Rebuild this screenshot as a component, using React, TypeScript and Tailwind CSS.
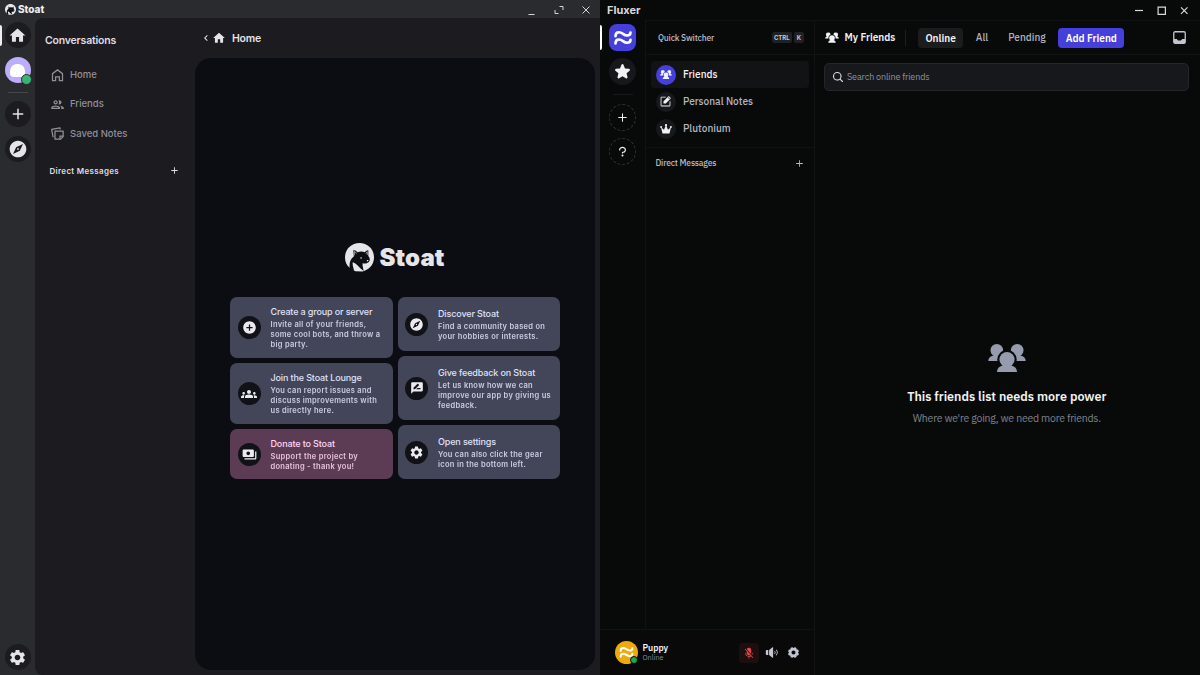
import type { ReactNode } from "react";
import {
  MdAdd,
  MdAddCircle,
  MdChevronLeft,
  MdExplore,
  MdGroups,
  MdHome,
  MdOutlineGroup,
  MdPayments,
  MdRateReview,
  MdSettings,
} from "react-icons/md";
import {
  PiGearFill,
  PiMagnifyingGlassBold,
  PiMicrophoneSlashFill,
  PiNotePencilFill,
  PiPlusBold,
  PiQuestionMarkBold,
  PiSpeakerHighFill,
  PiStarFill,
} from "react-icons/pi";

function StoatMark({ className }: { className?: string }) {
  return (
    <svg viewBox="0 0 56 56" className={className}>
      <path
        fill="#e6e5ea"
        d="M9 48C3 43 0 36 0 28 0 12 12 0 28 0s28 12 28 28c0 12-7 21-17 25l-5 2-14-.5Z"
      />
      <path
        fill="#0d0e13"
        d="M9 49C8 38 10 31 17 26L16 14q5-1 8 4 8-3 14 0 3-4 7-4v11q3 3 3 8-1 5-6 6-4 1-8 0v5l2 10q-6-4-12-11-5-5-9-6-1 6 2 14 1 4-8-2Z"
      />
      <path d="M18 24V16.500q3 1 4 4M40.500 20q1-2.500 2.500-3v6" fill="none" stroke="#e6e5ea" strokeWidth="1.300" />
      <circle cx="31" cy="29" r="1.600" fill="#e6e5ea" />
      <path d="M42 33h4l-3 3Z" fill="#e6e5ea" />
    </svg>
  );
}

function HouseOutline({ className }: { className?: string }) {
  return (
    <svg viewBox="0 0 24 24" fill="none" stroke="currentColor" strokeWidth="2" className={className}>
      <path d="M4 20V9l8-6 8 6v11h-5v-6H9v6Z" />
    </svg>
  );
}

function NoteStack({ className }: { className?: string }) {
  return (
    <svg viewBox="0 0 24 24" fill="none" stroke="currentColor" strokeWidth="2" className={className}>
      <path d="M8 8h13v9l-4 4H8Z" strokeLinejoin="round" />
      <path d="M21 16h-5v5" />
      <path d="M5 18 2.600 5.500 16 3l.5 2.500" strokeLinejoin="round" />
    </svg>
  );
}

function FriendsGlyph({ className }: { className?: string }) {
  return (
    <svg viewBox="0 0 38 28" fill="currentColor" className={className}>
      <mask id="friends-gap">
        <rect width="38" height="28" fill="white" />
        <circle cx="19" cy="15.500" r="9.700" fill="black" />
      </mask>
      <g mask="url(#friends-gap)">
        <circle cx="8.800" cy="6.300" r="6.300" />
        <path d="M5.500 10v1.500C2 12.500.3 14 .3 17H14v-7Z" />
        <circle cx="29.200" cy="6.300" r="6.300" />
        <path d="M32.500 10v1.500c3.500 1 5.200 2.500 5.200 5.500H24v-7Z" />
      </g>
      <circle cx="19" cy="15.500" r="7.600" />
      <path d="M14.500 20v1.500C11 22.500 9 24.500 9 28h20c0-3.500-2-5.500-5.500-6.500V20Z" />
    </svg>
  );
}

function Waves({ className }: { className?: string }) {
  return (
    <svg viewBox="0 0 18 14" fill="none" stroke="white" strokeWidth="2.600" strokeLinecap="round" className={className}>
      <path d="M1.500 5.200C1.500 2.500 3 1.300 5 1.300c3.500 0 4.500 3.200 8 3.200 2.200 0 3.500-1.200 3.500-3" />
      <path d="M1.500 12.400c0-2.700 1.500-3.900 3.500-3.900 3.500 0 4.500 3.200 8 3.200 2.200 0 3.500-1.200 3.500-3" />
    </svg>
  );
}

function Crown({ className }: { className?: string }) {
  return (
    <svg viewBox="0 0 24 24" fill="currentColor" className={className}>
      <path d="M5 21 2 8.500l6 5L12 4l4 9.500 6-5L19 21Z" />
      <circle cx="12" cy="4.500" r="2.300" />
      <circle cx="2.300" cy="8" r="2" />
      <circle cx="21.700" cy="8" r="2" />
    </svg>
  );
}

function Inbox({ className }: { className?: string }) {
  return (
    <svg viewBox="0 0 13 13" className={className}>
      <rect x="0.750" y="0.750" width="11.500" height="11.500" rx="1.300" fill="none" stroke="currentColor" strokeWidth="1.300" />
      <path d="M1 8h2.800l1.200 1.600h3L9.200 8H12v4H1Z" fill="currentColor" />
    </svg>
  );
}

function RailButton({ children }: { children: ReactNode }) {
  return (
    <div className="flex size-[26px] shrink-0 items-center justify-center rounded-full bg-[#1c1b20] text-[#e5e4ea]">
      {children}
    </div>
  );
}

function StoatNavItem({ icon, label }: { icon: ReactNode; label: string }) {
  return (
    <div className="flex h-[29.300px] items-center gap-[5.500px] pl-[14.500px] text-[#929096]">
      {icon}
      <span className="text-[9.500px] font-medium">{label}</span>
    </div>
  );
}

type StoatCardProps = {
  icon: ReactNode;
  title: string;
  lines: string[];
  className: string;
};

function StoatCard({ icon, title, lines, className }: StoatCardProps) {
  return (
    <div className={`flex items-center gap-[10px] rounded-[7px] pl-[7.500px] ${className}`}>
      <div className="flex size-[23px] shrink-0 items-center justify-center rounded-full bg-[#111218] text-[#eceaf0]">
        {icon}
      </div>
      <div className="whitespace-nowrap">
        <div className="mb-px text-[9px] leading-[14px] font-medium tracking-[-0.015em]">{title}</div>
        {lines.map((line) => (
          <div key={line} className="text-[7.500px] leading-[10px] font-semibold tracking-[0.040em] opacity-85">
            {line}
          </div>
        ))}
      </div>
    </div>
  );
}

function StoatWindow() {
  return (
    <div className="flex h-full w-[600px] flex-col bg-[#2a2b2f] font-[Inter,sans-serif]">
      <div className="flex h-[18px] shrink-0 items-center pr-[10px] pl-[5px] text-[#d5d5d9]">
        <StoatMark className="size-[11px]" />
        <span className="ml-[2px] text-[10px] font-extrabold text-[#eeeef0]">Stoat</span>
        <svg viewBox="0 0 62 10" fill="none" stroke="currentColor" className="mt-px ml-auto h-[10px] w-[62px]">
          <path d="M0.500 9.500h6" />
          <path d="M27 5v3.500h3.500M31.500 1.500H35V5" />
          <path d="m54.500 1.500 7 7m0-7-7 7" />
        </svg>
      </div>

      <div className="flex min-h-0 flex-1">
        <nav className="relative flex w-[35px] shrink-0 flex-col items-center pt-[4px] pb-[5px]">
          <div className="absolute top-[7px] left-0 h-[21px] w-[2px] rounded-r bg-[#eeeef0]" />
          <RailButton>
            <MdHome className="size-[19px]" />
          </RailButton>
          <div className="relative mt-[9px] flex size-[26px] shrink-0 items-center justify-center rounded-full bg-[#bcaefa]">
            <div className="mt-[1px] h-[13px] w-[15px] rounded-t-[7px] rounded-b-[4px] bg-white" />
            <div className="absolute -right-[1px] -bottom-[2px] size-[11px] rounded-full border border-[#2a2b2f] bg-[#37b573]" />
          </div>
          <div className="my-[8.500px] h-px w-[20px] shrink-0 bg-[#45464c]" />
          <RailButton>
            <MdAdd className="size-[18px]" />
          </RailButton>
          <div className="mt-[9px]">
            <RailButton>
              <MdExplore className="size-[20px]" />
            </RailButton>
          </div>
          <div className="mt-auto">
            <RailButton>
              <MdSettings className="size-[19px]" />
            </RailButton>
          </div>
        </nav>

        <div className="flex min-w-0 flex-1 rounded-l-[8px] bg-[#1c1b20]">
          <aside className="flex w-[160px] shrink-0 flex-col">
            <div className="mt-[13px] pl-[10px] text-[10.500px] leading-[20px] font-semibold tracking-[-0.018em] text-[#dedde3]">
              Conversations
            </div>
            <div className="mt-[9.500px]">
              <StoatNavItem icon={<HouseOutline className="size-[15px]" />} label="Home" />
              <StoatNavItem icon={<MdOutlineGroup className="size-[15px]" />} label="Friends" />
              <StoatNavItem icon={<NoteStack className="size-[15px]" />} label="Saved Notes" />
            </div>
            <div className="mt-[12.500px] flex h-[20px] items-center justify-between pr-[15px] pl-[14.500px] text-[#dedde3]">
              <span className="text-[8px] font-semibold tracking-[0.040em]">Direct Messages</span>
              <MdAdd className="size-[11px]" />
            </div>
          </aside>

          <main className="flex flex-1 flex-col pr-[5px] pb-[5px]">
            <div className="flex h-[40px] items-center pl-[5px] text-[#e5e4ea]">
              <MdChevronLeft className="size-[12px]" />
              <MdHome className="size-[14px]" />
              <span className="ml-[6px] pt-px text-[10.500px] font-semibold tracking-[-0.020em]">Home</span>
            </div>
            <div className="flex flex-1 flex-col items-center rounded-[16px] bg-[#0c0d12] pt-[185.400px]">
              <div className="flex items-center gap-[5px]">
                <StoatMark className="size-[29px]" />
                <span className="text-[24px] leading-[29px] font-black tracking-[0.005em] text-[#e6e5ea]">Stoat</span>
              </div>
              <div className="mt-[25px] flex h-[182px] gap-[5px]">
                <div className="flex w-[162.500px] flex-col gap-[5px]">
                  <StoatCard
                    icon={<MdAddCircle className="size-[15px]" />}
                    title="Create a group or server"
                    lines={["Invite all of your friends,", "some cool bots, and throw a", "big party."]}
                    className="h-[61px] bg-[#434659] text-[#dfe1f9]"
                  />
                  <StoatCard
                    icon={<MdGroups className="size-[16px]" />}
                    title="Join the Stoat Lounge"
                    lines={["You can report issues and", "discuss improvements with", "us directly here."]}
                    className="h-[61px] bg-[#434659] text-[#dfe1f9]"
                  />
                  <StoatCard
                    icon={<MdPayments className="size-[15px]" />}
                    title="Donate to Stoat"
                    lines={["Support the project by", "donating - thank you!"]}
                    className="h-[50px] bg-[#5c3c55] text-[#ffd7f3]"
                  />
                </div>
                <div className="flex w-[162.500px] flex-col gap-[5px]">
                  <StoatCard
                    icon={<MdExplore className="size-[15px]" />}
                    title="Discover Stoat"
                    lines={["Find a community based on", "your hobbies or interests."]}
                    className="h-[54px] bg-[#434659] text-[#dfe1f9]"
                  />
                  <StoatCard
                    icon={<MdRateReview className="size-[14px]" />}
                    title="Give feedback on Stoat"
                    lines={["Let us know how we can", "improve our app by giving us", "feedback."]}
                    className="h-[64px] bg-[#434659] text-[#dfe1f9]"
                  />
                  <StoatCard
                    icon={<MdSettings className="size-[15px]" />}
                    title="Open settings"
                    lines={["You can also click the gear", "icon in the bottom left."]}
                    className="h-[54px] bg-[#434659] text-[#dfe1f9]"
                  />
                </div>
              </div>
            </div>
          </main>
        </div>
      </div>
    </div>
  );
}

function DashedButton({ children }: { children: ReactNode }) {
  return (
    <div className="flex size-[27px] shrink-0 items-center justify-center rounded-full border border-dashed border-[#303134] text-[#f0f0f2]">
      {children}
    </div>
  );
}

function FluxerNavItem({ icon, label, active }: { icon: ReactNode; label: string; active?: boolean }) {
  return (
    <div
      className={`flex h-[27px] items-center gap-[7.500px] rounded-[4px] pl-[4.500px] text-[10.100px] font-medium ${
        active ? "bg-[#121314] text-[#f2f2f4]" : "text-[#b4b6c0]"
      }`}
    >
      <div
        className={`flex size-[20px] items-center justify-center rounded-full text-[#f2f2f4] ${
          active ? "bg-[#4540dc]" : "bg-[#17181b]"
        }`}
      >
        {icon}
      </div>
      <span>{label}</span>
    </div>
  );
}

function FluxerWindow() {
  return (
    <div className="flex h-full w-[600px] flex-col bg-[#080a0a] font-['IBM_Plex_Sans','Noto_Sans',sans-serif]">
      <div className="flex h-[20px] shrink-0 items-center justify-between pr-[11px] pl-[7px]">
        <span className="font-[Inter,sans-serif] text-[11px] font-bold text-[#d8d8da]">Fluxer</span>
        <svg viewBox="0 0 54 9" fill="none" stroke="#d8d8dc" strokeWidth="1.200" className="h-[9px] w-[54px]">
          <path d="M0 4.500h8" />
          <path d="M23.100 1.100h7.300v7.300h-7.300Z" />
          <path d="m46 1.300 6.500 6.500m0-6.500L46 7.800" />
        </svg>
      </div>

      <div className="flex min-h-0 flex-1">
        <div className="flex w-[215px] shrink-0 flex-col border-r border-[#101213]">
          <div className="flex min-h-0 flex-1">
            <nav className="relative flex w-[45px] shrink-0 flex-col items-center pt-[4px]">
              <div className="absolute top-[5px] left-0 h-[25px] w-[2px] rounded-r bg-white" />
              <div className="flex size-[27px] items-center justify-center rounded-[8px] bg-[#4540dc]">
                <Waves className="h-[14px] w-[18px]" />
              </div>
              <div className="mt-[7px] flex size-[27px] items-center justify-center rounded-full bg-[#17181b] text-[#f2f2f4]">
                <PiStarFill className="size-[17px]" />
              </div>
              <div className="mt-[9px] h-px w-[20px] bg-[#17191b]" />
              <div className="mt-[9px] flex flex-col gap-[7px]">
                <DashedButton>
                  <PiPlusBold className="size-[11px]" />
                </DashedButton>
                <DashedButton>
                  <PiQuestionMarkBold className="size-[13px]" />
                </DashedButton>
              </div>
            </nav>

            <aside className="flex-1 border-t border-l border-[#101213]">
              <div className="flex h-[34px] items-center border-b border-[#101213] pr-[10px] pl-[12px]">
                <span className="pt-px text-[8.500px] font-medium tracking-[-0.022em] text-[#b8bac4]">
                  Quick Switcher
                </span>
                <div className="ml-auto flex gap-[2px] text-[6px] leading-[11px] font-bold text-[#c8c9ce]">
                  <kbd className="rounded-[2px] bg-[#202124] px-[2px] font-[Inter,sans-serif]">CTRL</kbd>
                  <kbd className="rounded-[2px] bg-[#202124] px-[3px] font-[Inter,sans-serif]">K</kbd>
                </div>
              </div>
              <div className="px-[5px] pt-[6px]">
                <FluxerNavItem active icon={<FriendsGlyph className="h-[9px] w-[12px]" />} label="Friends" />
                <FluxerNavItem icon={<PiNotePencilFill className="size-[13px]" />} label="Personal Notes" />
                <FluxerNavItem icon={<Crown className="size-[12px]" />} label="Plutonium" />
              </div>
              <div className="mt-[5px] flex h-[31px] items-center justify-between border-t border-[#101213] pr-[10px] pl-[9.500px] text-[#b8bac4]">
                <span className="text-[8.500px] font-medium tracking-[-0.022em]">Direct Messages</span>
                <PiPlusBold className="size-[9px]" />
              </div>
            </aside>
          </div>

          <div className="flex h-[46px] shrink-0 items-center border-t border-[#101213] bg-[#090909] pr-[14px] pl-[15px]">
            <div className="relative flex size-[23px] items-center justify-center rounded-full bg-[#edaa0c]">
              <Waves className="h-[11px] w-[15px]" />
              <div className="absolute right-0 bottom-0 size-[8px] rounded-full border border-[#090909] bg-[#1fa84f]" />
            </div>
            <div className="-mt-px ml-[4.500px]">
              <div className="text-[8.700px] leading-[11px] font-semibold text-[#f2f2f4]">Puppy</div>
              <div className="text-[7.200px] leading-[9px] text-[#8b8d95]">Online</div>
            </div>
            <div className="ml-auto flex items-center text-[#c3c5d0]">
              <div className="flex size-[20px] items-center justify-center rounded-[4px] bg-[#1d0f10] text-[#dd4b50]">
                <PiMicrophoneSlashFill className="size-[12px]" />
              </div>
              <PiSpeakerHighFill className="ml-[6px] size-[13px]" />
              <PiGearFill className="ml-[9px] size-[13px]" />
            </div>
          </div>
        </div>

        <main className="flex flex-1 flex-col border-t border-[#101213]">
          <header className="flex h-[34px] shrink-0 items-center border-b border-[#101213] pr-[14px] pl-[10px] text-[10.100px] font-semibold">
            <FriendsGlyph className="h-[11px] w-[14px] text-[#f2f2f4]" />
            <span className="ml-[5.500px] pt-px text-[#f2f2f4]">My Friends</span>
            <div className="ml-[10px] h-[16px] w-px bg-[#1d1f21]" />
            <div className="ml-[12px] h-[20px] rounded-[4px] bg-[#1a1c1d] px-[7px] leading-[21px] text-[#f2f2f4]">
              Online
            </div>
            <div className="ml-[13px] pt-px font-medium text-[#b0b2bc]">All</div>
            <div className="ml-[20px] pt-px font-medium text-[#b0b2bc]">Pending</div>
            <div className="ml-[12.500px] h-[20px] rounded-[4px] bg-[#4540dc] px-[7.500px] leading-[21px] text-white">
              Add Friend
            </div>
            <Inbox className="ml-auto size-[13px] text-[#c3c5d0]" />
          </header>
          <div className="mt-[8px] mr-[11px] ml-[9px] flex h-[28px] shrink-0 items-center gap-[3px] rounded-[5px] border border-[#25262a] bg-[#17181b] pl-[7px]">
            <PiMagnifyingGlassBold className="size-[12px] text-[#d8d9df]" />
            <span className="text-[9px] tracking-[-0.014em] text-[#8f919b]">Search online friends</span>
          </div>
          <div className="flex flex-1 flex-col items-center pt-[253px] pr-[1.500px]">
            <FriendsGlyph className="h-[28px] w-[38px] text-[#979bae]" />
            <h1 className="mt-[15px] text-[12.500px] leading-[18px] font-semibold text-[#f2f2f4]">
              This friends list needs more power
            </h1>
            <p className="mt-[6px] text-[10.500px] leading-[15px] tracking-[-0.022em] text-[#80838f]">
              Where we're going, we need more friends.
            </p>
          </div>
        </main>
      </div>
    </div>
  );
}

export default function App() {
  return (
    <div className="flex h-[675px] w-[1200px] overflow-hidden">
      <StoatWindow />
      <FluxerWindow />
    </div>
  );
}
